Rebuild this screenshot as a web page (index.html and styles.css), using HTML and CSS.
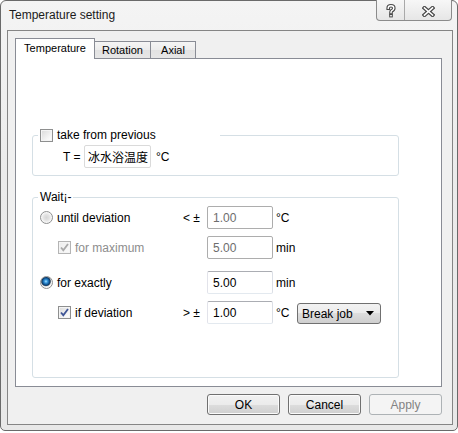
FILE: index.html
```html
<!DOCTYPE html>
<html>
<head>
<meta charset="utf-8">
<title>Temperature setting</title>
<link rel="stylesheet" href="styles.css">
</head>
<body>
<div class="window">
  <div class="titlebar">
    <span class="title">Temperature setting</span>
    <div class="caption">
      <span class="cap-btn help">
        <svg width="10" height="14" viewBox="0 0 10 14">
          <path d="M2.2 4.2 Q2.2 1.8 5 1.8 Q7.8 1.8 7.8 4.2 Q7.8 5.8 5.6 6.8 Q5 7.2 5 8.6" fill="none" stroke="#4a4a4a" stroke-width="3.6" stroke-linecap="square"/>
          <rect x="3.2" y="10" width="3.6" height="3.4" fill="#4a4a4a"/>
          <path d="M2.2 4.2 Q2.2 1.8 5 1.8 Q7.8 1.8 7.8 4.2 Q7.8 5.8 5.6 6.8 Q5 7.2 5 8.6" fill="none" stroke="#fff" stroke-width="1.4" stroke-linecap="square"/>
          <rect x="4.2" y="11" width="1.6" height="1.4" fill="#fff"/>
        </svg>
      </span>
      <span class="cap-btn close">
        <svg width="13" height="11" viewBox="0 0 13 11">
          <path d="M2.5 2 L10.5 9 M10.5 2 L2.5 9" stroke="#4a4a4a" stroke-width="4" stroke-linecap="square"/>
          <path d="M2.5 2 L10.5 9 M10.5 2 L2.5 9" stroke="#fff" stroke-width="1.6" stroke-linecap="square"/>
        </svg>
      </span>
    </div>
  </div>
  <div class="client">
    <div class="tabs">
      <div class="tab active">Temperature</div>
      <div class="tab rotation">Rotation</div>
      <div class="tab axial">Axial</div>
    </div>
    <div class="pane">
      <fieldset class="group g1">
        <legend class="legend-check"><span class="cb"></span><span class="lbl">take from previous</span></legend>
        <div class="g1-body">
          <span class="t-label">T =</span>
          <input class="edit cjk" type="text" value="冰水浴温度" readonly>
          <span class="unit-c">°C</span>
        </div>
      </fieldset>
      <fieldset class="group g2">
        <legend class="legend-text">Wait¡-</legend>
        <div class="g2-body">
          <div class="row">
            <div class="ctl"><span class="radio"></span><span class="lbl">until deviation</span></div>
            <span class="sym">&lt; ±</span>
            <input class="edit" type="text" value="1.00" disabled>
            <span class="unit">°C</span>
          </div>
          <div class="row">
            <div class="ctl sub"><span class="cb checked disabled"><svg width="11" height="11" viewBox="0 0 11 11"><path d="M2 5.5 L4.3 8.2 L9 2" fill="none" stroke="#a9a9a9" stroke-width="1.8"/></svg></span><span class="lbl dim">for maximum</span></div>
            <span class="sym"></span>
            <input class="edit" type="text" value="5.00" disabled>
            <span class="unit">min</span>
          </div>
          <div class="row wide">
            <div class="ctl"><span class="radio on"></span><span class="lbl">for exactly</span></div>
            <span class="sym"></span>
            <input class="edit on" type="text" value="5.00" readonly>
            <span class="unit">min</span>
          </div>
          <div class="row">
            <div class="ctl sub"><span class="cb checked"><svg width="11" height="11" viewBox="0 0 11 11"><path d="M2 5.5 L4.3 8.2 L9 2" fill="none" stroke="#3f5596" stroke-width="1.8"/></svg></span><span class="lbl">if deviation</span></div>
            <span class="sym">&gt; ±</span>
            <input class="edit on" type="text" value="1.00" readonly>
            <span class="unit">°C</span>
            <div class="combo"><span>Break job</span><svg width="8" height="5" viewBox="0 0 8 5"><path d="M0 0 H8 L4 4.5 Z" fill="#000"/></svg></div>
          </div>
        </div>
      </fieldset>
    </div>
    <div class="buttons">
      <button class="btn" type="button">OK</button>
      <button class="btn" type="button">Cancel</button>
      <button class="btn" type="button" disabled>Apply</button>
    </div>
  </div>
</div>
</body>
</html>
```
FILE: styles.css
```css
* { box-sizing: border-box; }

body {
  margin: 0;
  background: #ffffff;
  font-family: "Liberation Sans", Arial, sans-serif;
  font-size: 12px;
  color: #000;
}

.window {
  width: 458px;
  height: 431px;
  border: 1px solid #6a6a6a;
  border-radius: 6px 6px 5px 5px;
  background: linear-gradient(#f4f4f4, #ebebeb 40%, #e8e8e8);
  padding: 0 4px 5px 6px;
  display: flex;
  flex-direction: column;
}

.titlebar {
  height: 29px;
  flex: none;
  display: flex;
  justify-content: space-between;
  align-items: flex-start;
}

.title {
  padding: 6px 0 0 2px;
  line-height: 16px;
  font-size: 12px;
  color: #1b1b1b;
}

.caption {
  display: flex;
  margin-top: -1px;
  margin-right: 1px;
  height: 21px;
  border: 1px solid #8b8b8b;
  border-top: none;
  border-radius: 0 0 4px 4px;
  background: linear-gradient(#f7f7f7, #e6e6e6);
  overflow: hidden;
}

.cap-btn {
  display: flex;
  align-items: center;
  justify-content: center;
  height: 100%;
  padding-top: 2px;
}

.cap-btn.help {
  width: 28px;
  border-right: 1px solid #a9a9a9;
}

.cap-btn.close {
  width: 46px;
}

.client {
  flex: 1;
  border: 1px solid #858585;
  background: #f0f0f0;
  padding: 7px 10px 0 7px;
  display: flex;
  flex-direction: column;
}

.tabs {
  display: flex;
  align-items: flex-end;
  height: 20px;
  flex: none;
}

.tab {
  height: 17px;
  border: 1px solid #898c95;
  border-bottom: none;
  border-left: none;
  background: linear-gradient(#f5f5f5, #ececec 50%, #e2e2e2 50%, #e6e6e6);
  font-size: 11px;
  display: flex;
  align-items: center;
  justify-content: center;
  padding-bottom: 1px;
}

.tab.active {
  height: 21px;
  width: 80px;
  border-left: 1px solid #898c95;
  background: #fff;
  margin-bottom: -1px;
  position: relative;
  z-index: 1;
  padding-bottom: 2px;
}

.tab.rotation { width: 56px; }
.tab.axial { width: 45px; }

.pane {
  width: 427px;
  height: 329px;
  flex: none;
  border: 1px solid #898c95;
  background: #fff;
  padding-left: 16px;
}

.group {
  margin: 0;
  padding: 0;
  width: 367px;
  border: 1px solid #d5dfe5;
  border-radius: 3px;
}

.g1 { margin-top: 69px; }
.g2 { margin-top: 14px; }

.legend-check {
  margin-left: 5px;
  padding: 0 0 0 2px;
  width: 182px;
  height: 14px;
  display: flex;
  align-items: center;
}

.legend-text {
  margin-left: 5px;
  padding: 0 1px 0 2px;
  height: 14px;
  line-height: 14px;
}

.lbl { margin-left: 4px; white-space: nowrap; }
.lbl.dim { color: #8d8d8d; }

.cb {
  width: 13px;
  height: 13px;
  flex: none;
  border: 1px solid #8e8f8f;
  background: linear-gradient(135deg, #d9d9d9, #f6f6f6 70%, #ffffff);
  box-shadow: inset 0 0 0 1px #f4f4f4;
  display: flex;
  align-items: center;
  justify-content: center;
}

.cb.disabled {
  border-color: #b4b4b4;
  background: linear-gradient(135deg, #ececec, #fafafa);
}

.radio {
  width: 13px;
  height: 13px;
  flex: none;
  border-radius: 50%;
  border: 1px solid #8e8f8f;
  background: radial-gradient(circle at 50% 50%, #d6d6d6 0, #e4e4e4 3px, #f6f6f6 5px, #ffffff 6px);
}

.radio.on {
  background: radial-gradient(circle at 45% 40%, #a9e4ff 0, #3a9ae0 1.5px, #16609f 3px, #0c3d6e 4px, #5b6b7a 4.6px, #e9e9e9 5.2px, #f8f8f8 6px);
}

.g1-body {
  display: flex;
  align-items: center;
  padding: 3px 0 7px 30px;
}

.t-label { width: 21px; }

.edit {
  height: 23px;
  margin: 0;
  border: 1px solid;
  border-color: #abadb3 #dbdfe6 #e3e9ef #e2e3ea;
  border-radius: 2px;
  background: #fff;
  font-family: "Liberation Sans", Arial, sans-serif;
  font-size: 12px;
  color: #000;
  padding: 0 0 0 5px;
  outline: none;
}

.edit:disabled {
  border-color: #adadad;
  color: #6d6d6d;
  background: #fff;
}

.edit.cjk {
  width: 67px;
  padding-left: 3px;
  font-family: "Liberation Sans", "Noto Sans CJK SC", sans-serif;
  border-color: #dadada;
}

.unit-c { margin-left: 5px; }

.g2-body {
  padding: 2px 0 53px 7px;
}

.row {
  display: grid;
  grid-template-columns: 143px 24px 66px 24px 84px;
  height: 23px;
  align-items: center;
}

.row + .row { margin-top: 7px; }
.row.wide { margin-top: 12px; }

.ctl {
  display: flex;
  align-items: center;
}

.ctl.sub { padding-left: 18px; }

.row .edit { width: 66px; }

.unit { padding-left: 3px; }

.combo {
  width: 84px;
  height: 21px;
  border: 1px solid #707070;
  border-radius: 3px;
  background: linear-gradient(#f2f2f2, #ebebeb 50%, #dddddd 50%, #cfcfcf);
  display: flex;
  align-items: center;
  justify-content: space-between;
  padding: 0 6px 0 4px;
  margin-top: 2px;
}

.buttons {
  display: flex;
  justify-content: flex-end;
  gap: 8px;
  margin-top: 7px;
}

.btn {
  width: 73px;
  height: 21px;
  margin: 0;
  padding: 0;
  border: 1px solid #707070;
  border-radius: 3px;
  background: linear-gradient(#f2f2f2, #ebebeb 50%, #dddddd 50%, #cfcfcf);
  font-family: "Liberation Sans", Arial, sans-serif;
  font-size: 12px;
  color: #000;
  box-shadow: inset 0 0 0 1px #fbfbfb;
}

.btn:disabled {
  border-color: #adb2b5;
  background: #f4f4f4;
  color: #838383;
  box-shadow: none;
}
```
